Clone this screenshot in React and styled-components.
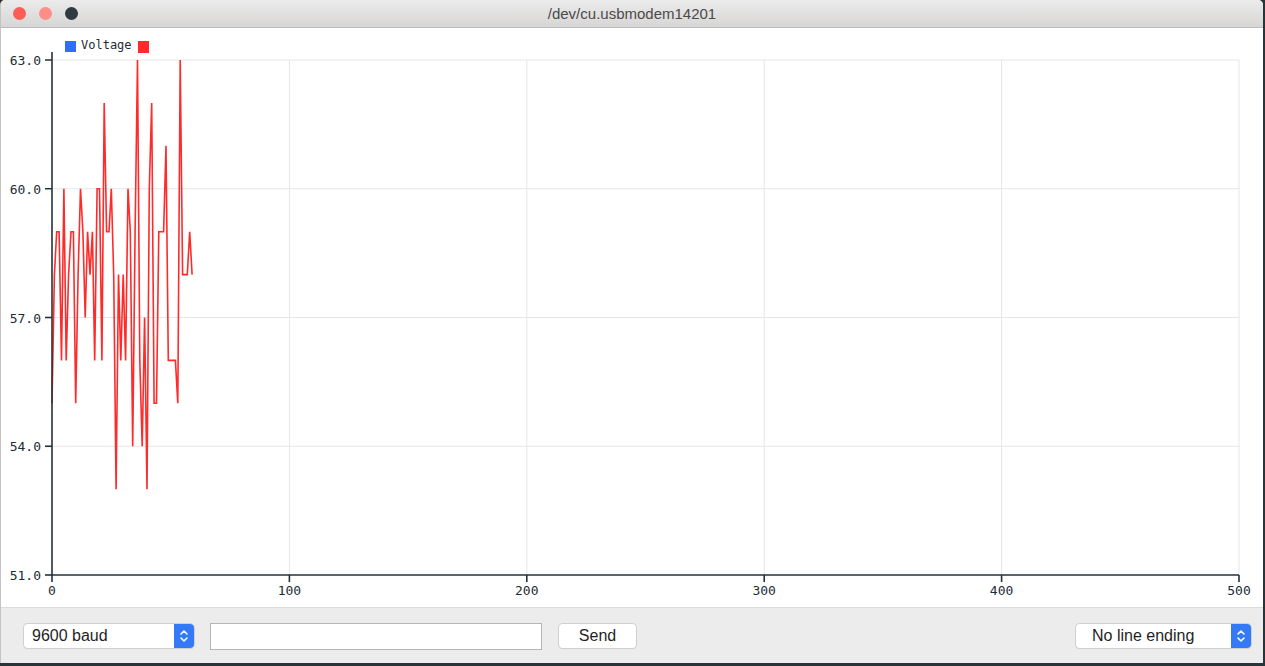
import React from 'react';
import styled, { createGlobalStyle } from "styled-components";

const GlobalStyle = createGlobalStyle`
  body {
    margin: 0;
    background: #27343a;
    font-family: "Liberation Sans", "Helvetica", "Arial", sans-serif;
  }
`;

const data = [55, 58, 59, 59, 56, 60, 56, 58, 59, 59, 55, 58, 60, 59, 57, 59, 58, 59, 56, 60,
  60, 56, 62, 59, 59, 60, 58, 53, 58, 56, 58, 56, 60, 59, 54, 59, 63, 56, 54, 57,
  53, 60, 62, 55, 55, 59, 59, 59, 61, 56, 56, 56, 56, 55, 63, 58, 58, 58, 59, 58];

const X0 = 51;
const X1 = 1238;
const Y0 = 547; // 51.0
const Y1 = 32;  // 63.0

const px = (i) => X0 + (i / 500) * (X1 - X0);
const py = (v) => Y0 - ((v - 51) / 12) * (Y0 - Y1);

function Chevrons() {
  return (
    <svg width="12" height="18" viewBox="0 0 12 18">
      <path d="M3 7 L6 4 L9 7" fill="none" stroke="#fff" strokeWidth="1.6" strokeLinecap="round" strokeLinejoin="round" />
      <path d="M3 11 L6 14 L9 11" fill="none" stroke="#fff" strokeWidth="1.6" strokeLinecap="round" strokeLinejoin="round" />
    </svg>
  );
}

function Plot() {
  const yTicks = [51, 54, 57, 60, 63];
  const xTicks = [0, 100, 200, 300, 400, 500];
  const points = data.map((v, i) => `${px(i).toFixed(1)},${py(v).toFixed(1)}`).join(' ');

  return (
    <PlotSvg width="1262" height="579" viewBox="0 0 1262 579">
      {yTicks.slice(1).map((t) => (
        <line key={'gy' + t} x1={X0} x2={X1} y1={py(t)} y2={py(t)} stroke="#e6e6e6" strokeWidth="1" />
      ))}
      {xTicks.slice(1).map((t) => (
        <line key={'gx' + t} x1={px(t)} x2={px(t)} y1={Y1} y2={Y0} stroke="#e6e6e6" strokeWidth="1" />
      ))}

      <polyline points={points} fill="none" stroke="#ff2a2a" strokeWidth="1.6" strokeLinejoin="miter" />

      <line x1={X0} x2={X0} y1={Y1 - 8} y2={Y0} stroke="#22323a" strokeWidth="1.6" />
      <line x1={X0} x2={X1} y1={Y0} y2={Y0} stroke="#22323a" strokeWidth="1.6" />

      {yTicks.map((t) => (
        <g key={'ty' + t}>
          <line x1={X0 - 7} x2={X0} y1={py(t)} y2={py(t)} stroke="#22323a" strokeWidth="1.6" />
          <AxisText x={X0 - 11} y={py(t) + 5} textAnchor="end">{t.toFixed(1)}</AxisText>
        </g>
      ))}
      {xTicks.map((t) => (
        <g key={'tx' + t}>
          <line x1={px(t)} x2={px(t)} y1={Y0} y2={Y0 + 7} stroke="#22323a" strokeWidth="1.6" />
          <AxisText x={px(t)} y={Y0 + 20} textAnchor="middle">{t}</AxisText>
        </g>
      ))}

      <rect x="64" y="13" width="11" height="11" fill="#2f6ff6" />
      <LegendText x="80" y="21">Voltage</LegendText>
      <rect x="137" y="13" width="11" height="12" fill="#ff2a2a" />
    </PlotSvg>
  );
}

export default function App() {
  return (
    <>
      <GlobalStyle />
      <Window>
        <TitleBar>
          <Lights>
            <Light color="#fb5e57" />
            <Light color="#fd8f88" />
            <Light color="#2f3b40" />
          </Lights>
          <Title>/dev/cu.usbmodem14201</Title>
          <span />
        </TitleBar>
        <PlotArea>
          <Plot />
        </PlotArea>
        <BottomBar>
          <Select width="170px">
            <SelectLabel pad="8px">9600 baud</SelectLabel>
            <Stepper><Chevrons /></Stepper>
          </Select>
          <TextField />
          <SendButton>Send</SendButton>
          <Spacer />
          <Select width="175px">
            <SelectLabel pad="16px">No line ending</SelectLabel>
            <Stepper><Chevrons /></Stepper>
          </Select>
        </BottomBar>
      </Window>
    </>
  );
}

const Window = styled.div`
  width: 1262px;
  height: 663px;
  display: flex;
  flex-direction: column;
  background: #fff;
  border-radius: 5px 5px 0 0;
  border-left: 1px solid #c4c4c4;
  overflow: hidden;
`;

const TitleBar = styled.div`
  height: 27px;
  flex-shrink: 0;
  display: grid;
  grid-template-columns: 1fr auto 1fr;
  align-items: center;
  background: linear-gradient(#ebebeb, #d7d6d5);
  border-bottom: 1px solid #b9bcbf;
`;

const Lights = styled.div`
  display: flex;
  gap: 13px;
  padding-left: 12px;
`;

const Light = styled.span`
  width: 13px;
  height: 13px;
  border-radius: 50%;
  background: ${(p) => p.color};
`;

const Title = styled.div`
  font-size: 15px;
  color: #4a4a4a;
`;

const PlotArea = styled.div`
  flex: 1;
  background: #fff;
`;

const PlotSvg = styled.svg`
  display: block;
`;

const AxisText = styled.text`
  font-family: "DejaVu Sans Mono", "Liberation Mono", monospace;
  font-size: 13px;
  fill: #1d2c34;
`;

const LegendText = styled(AxisText)`
  font-size: 12px;
`;

const BottomBar = styled.div`
  height: 56px;
  flex-shrink: 0;
  display: flex;
  align-items: center;
  padding: 0 12px 0 23px;
  background: #ececec;
  border-top: 1px solid #dcdcdc;
`;

const Select = styled.div`
  width: ${(p) => p.width};
  height: 24px;
  display: flex;
  align-items: stretch;
  background: #fff;
  border-radius: 4px;
  box-shadow: 0 0 0 1px #d0d0d0, 0 1px 1px rgba(0, 0, 0, 0.12);
  overflow: hidden;
`;

const SelectLabel = styled.div`
  flex: 1;
  display: flex;
  align-items: center;
  padding-left: ${(p) => p.pad};
  font-size: 16px;
  color: #1f1f1f;
`;

const Stepper = styled.div`
  width: 20px;
  display: flex;
  align-items: center;
  justify-content: center;
  background: #3479f6;
`;

const TextField = styled.input`
  width: 332px;
  height: 27px;
  margin-left: 16px;
  box-sizing: border-box;
  border: 1px solid #b5b5b5;
  background: #fff;
  outline: none;
`;

const SendButton = styled.button`
  width: 77px;
  height: 24px;
  margin-left: 17px;
  background: #fff;
  border: none;
  border-radius: 4px;
  box-shadow: 0 0 0 1px #d0d0d0, 0 1px 1px rgba(0, 0, 0, 0.12);
  font-family: "Liberation Sans", "Helvetica", "Arial", sans-serif;
  font-size: 16px;
  color: #1f1f1f;
`;

const Spacer = styled.div`
  flex: 1;
`;
